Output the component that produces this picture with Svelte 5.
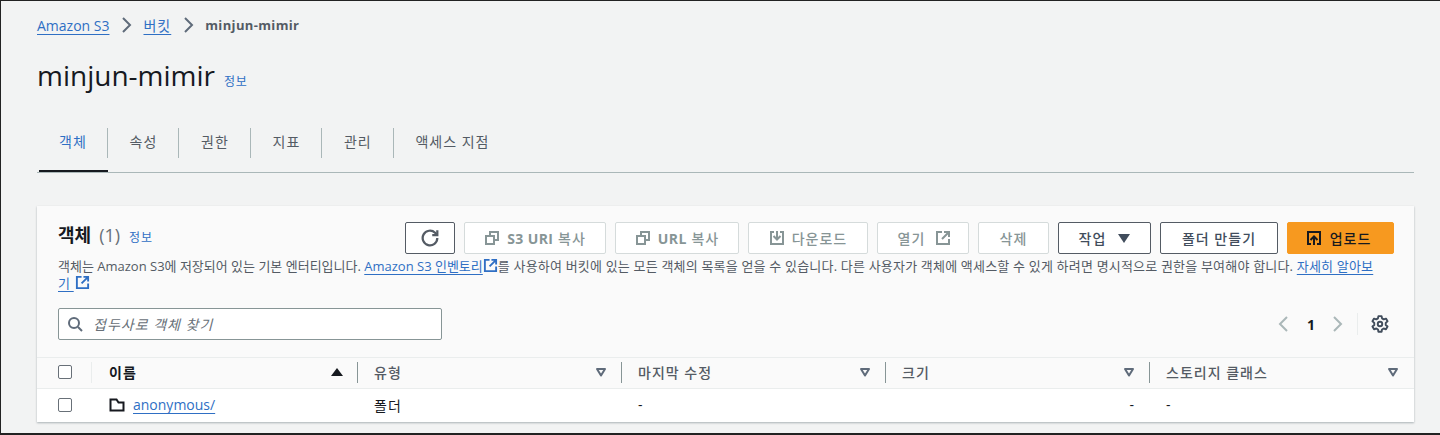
<script lang="ts">
  const tabs = ['객체', '속성', '권한', '지표', '관리', '액세스 지점'];
  const columns = ['유형', '마지막 수정', '크기', '스토리지 클래스'];
</script>

{#snippet external(size = 15)}
  <svg class="ext" width={size} height={size} viewBox="0 0 16 16" fill="none" stroke="currentColor" stroke-width="2">
    <path d="M7 2H2v12h12V9" />
    <path d="M9 2h5v5M14 2 7 9" />
  </svg>
{/snippet}

{#snippet copy()}
  <svg width="16" height="16" viewBox="0 0 16 16" fill="none" stroke="currentColor" stroke-width="2">
    <path d="M2 6h8v8H2z" />
    <path d="M6 5V2h8v8h-3" />
  </svg>
{/snippet}

{#snippet caret()}
  <svg class="caret" width="12" height="12" viewBox="0 0 12 12" fill="none" stroke="#5f6b7a" stroke-width="2">
    <path d="M2 3h8L6 9.5z" stroke-linejoin="round" />
  </svg>
{/snippet}

<div class="page">
  <nav class="crumbs">
    <a href="#s3">Amazon S3</a>
    <svg width="16" height="16" viewBox="0 0 16 16" fill="none" stroke="#5f6b7a" stroke-width="2"><path d="m4 1 7 7-7 7" /></svg>
    <a class="ko" href="#buckets">버킷</a>
    <svg width="16" height="16" viewBox="0 0 16 16" fill="none" stroke="#5f6b7a" stroke-width="2"><path d="m4 1 7 7-7 7" /></svg>
    <span class="current">minjun-mimir</span>
  </nav>

  <div class="title-row">
    <h1>minjun-mimir</h1>
    <a class="info" href="#info">정보</a>
  </div>

  <div class="tabs">
    {#each tabs as tab, i}
      <div class="tab" class:active={i === 0}><span>{tab}</span></div>
    {/each}
  </div>

  <section class="card">
    <div class="card-head">
      <div class="head-row">
        <div class="card-title">
          <h2>객체</h2>
          <span class="count">(1)</span>
          <a class="info" href="#info">정보</a>
        </div>
        <div class="actions">
          <button class="btn refresh" aria-label="새로 고침">
            <svg width="18" height="18" viewBox="0 0 16 16" fill="none" stroke="currentColor" stroke-width="2">
              <path d="M14.5 8a6.5 6.5 0 1 1-2-4.7L14 5" />
              <path d="M14.5 1v4.5H10" />
            </svg>
          </button>
          <button class="btn off w142">{@render copy()}<span><b>S3 URI</b> 복사</span></button>
          <button class="btn off w124">{@render copy()}<span><b>URL</b> 복사</span></button>
          <button class="btn off w120">
            <svg width="16" height="16" viewBox="0 0 16 16" fill="none" stroke="currentColor" stroke-width="2">
              <path d="M5 2H2v12h12V2h-3" />
              <path d="M8 1v8M4.5 6 8 9.5 11.5 6" />
            </svg>
            다운로드
          </button>
          <button class="btn off w92">열기 {@render external(16)}</button>
          <button class="btn off w71">삭제</button>
          <button class="btn w93">작업
            <svg width="12" height="12" viewBox="0 0 12 12" fill="currentColor"><path d="M0 2h12L6 11z" /></svg>
          </button>
          <button class="btn w118">폴더 만들기</button>
          <button class="btn primary w107">
            <svg width="16" height="16" viewBox="0 0 16 16" fill="none" stroke="currentColor" stroke-width="2">
              <path d="M5 14H2V2h12v12h-3" />
              <path d="M8 15V7M4.5 10 8 6.5 11.5 10" />
            </svg>
            업로드
          </button>
        </div>
      </div>
      <p class="desc">객체는 Amazon S3에 저장되어 있는 기본 엔터티입니다. <a href="#inv">Amazon S3 인벤토리 </a>{@render external()}<span class="rest">를 사용하여 버킷에 있는 모든 객체의 목록을 얻을 수 있습니다. 다른 사용자가 객체에 액세스할 수 있게 하려면 명시적으로 권한을 부여해야 합니다. <a href="#more">자세히 알아보</a><span class="glue"><a href="#more">기&nbsp;</a>{@render external()}</span></span></p>
      <div class="tools">
        <div class="search">
          <svg width="16" height="16" viewBox="0 0 16 16" fill="none" stroke="#5f6b7a" stroke-width="2">
            <circle cx="7" cy="7" r="5" />
            <path d="m11 11 4 4" />
          </svg>
          <span>접두사로 객체 찾기</span>
        </div>
        <div class="pager">
          <svg width="16" height="16" viewBox="0 0 16 16" fill="none" stroke="#aab7b8" stroke-width="2"><path d="m11 1-7 7 7 7" /></svg>
          <b>1</b>
          <svg width="16" height="16" viewBox="0 0 16 16" fill="none" stroke="#aab7b8" stroke-width="2"><path d="m4 1 7 7-7 7" /></svg>
          <div class="gear">
            <svg width="18" height="18" viewBox="0 0 16 16" fill="none" stroke="#414d5c" stroke-width="1.7">
              <circle cx="8" cy="8" r="2" />
              <path d="M6.6 1h2.8l.4 2 1.5.9 2-.7 1.4 2.4-1.6 1.4v1.9l1.6 1.4-1.4 2.4-2-.7-1.5.9-.4 2H6.6l-.4-2-1.5-.9-2 .7-1.4-2.4 1.6-1.4V7L1.3 5.6l1.4-2.4 2 .7 1.5-.9z" stroke-linejoin="round" />
            </svg>
          </div>
        </div>
      </div>
    </div>

    <div class="table">
      <div class="th check"><span class="box"></span></div>
      <div class="th name">
        <span>이름</span>
        <svg width="12" height="12" viewBox="0 0 12 12"><path d="M0 10h12L6 2z" fill="#16191f" /></svg>
      </div>
      {#each columns as col}
        <div class="th"><span>{col}</span>{@render caret()}</div>
      {/each}

      <div class="td check"><span class="box"></span></div>
      <div class="td folder">
        <svg width="16" height="16" viewBox="0 0 16 16" fill="none" stroke="#16191f" stroke-width="2">
          <path d="M1.5 2.5h6l2 3h5v8h-13z" />
        </svg>
        <a href="#anon">anonymous/</a>
      </div>
      <div class="td ko">폴더</div>
      <div class="td">-</div>
      <div class="td right">-</div>
      <div class="td">-</div>
    </div>
  </section>
</div>

<style>
  :global(body) {
    margin: 0;
    background: #f2f3f3;
  }

  .page {
    box-sizing: border-box;
    height: 435px;
    overflow: hidden;
    border: 1px solid #222;
    border-width: 1px 0 2px 1px;
    padding: 13px 26px 0 36px;
    font-family: "Open Sans", "Noto Sans CJK KR", sans-serif;
    font-size: 14px;
    color: #16191f;
  }

  a {
    color: #2f6fc4;
    text-underline-offset: 3px;
  }

  .ko {
    letter-spacing: 1px;
  }

  .crumbs {
    display: flex;
    align-items: center;
    gap: 10px;
    height: 22px;
    font-size: 14px;
  }

  .crumbs a.ko {
    margin-left: -2px;
  }

  .current {
    margin-left: -2px;
    font-weight: 700;
    font-size: 13px;
    letter-spacing: 0.35px;
    color: #545b64;
  }

  .title-row {
    display: flex;
    align-items: baseline;
    gap: 9px;
    margin-top: 19px;
  }

  h1 {
    margin: 0;
    font-size: 28px;
    font-weight: 400;
    line-height: 40px;
    color: #16191f;
  }

  .info {
    font-size: 12px;
    letter-spacing: 0.8px;
    text-decoration: none;
  }

  .tabs {
    display: flex;
    height: 44px;
    margin-top: 33px;
    padding-left: 2px;
    border-bottom: 1px solid #aab7b8;
  }

  .tab {
    position: relative;
    height: 100%;
    padding: 0 21.85px;
    letter-spacing: 1px;
    line-height: 30px;
    color: #545b64;
  }

  .tab span {
    display: block;
    margin-top: -1px;
  }

  .tab:not(:last-child)::after {
    content: "";
    position: absolute;
    top: 0;
    right: 0;
    height: 30px;
    width: 1px;
    background: #aab7b8;
  }

  .tab.active {
    padding: 0 21px 0 20px;
    color: #2f6fc4;
  }

  .tab.active::before {
    content: "";
    position: absolute;
    left: 0;
    right: 0;
    bottom: 0;
    height: 2px;
    background: #16191f;
  }

  .card {
    margin-top: 33px;
    background: #fafafa;
    box-shadow: 0 1px 2px rgba(0, 27, 36, 0.3);
  }

  .card-head {
    padding: 16px 20px 17px 21px;
  }

  .head-row {
    display: flex;
    justify-content: space-between;
    align-items: flex-start;
  }

  .card-title {
    display: flex;
    align-items: baseline;
    gap: 7px;
    margin-top: -1px;
  }

  .card-title .info {
    margin-left: 2px;
    letter-spacing: 1px;
  }

  h2 {
    margin: 0;
    font-size: 18px;
    font-weight: 700;
  }

  .count {
    margin-left: 1px;
    font-size: 18px;
    color: #687078;
  }

  .actions {
    display: flex;
    gap: 9px;
  }

  .btn {
    box-sizing: border-box;
    display: flex;
    align-items: center;
    justify-content: center;
    gap: 7px;
    height: 32px;
    padding: 0;
    border: 1px solid #545b64;
    border-radius: 2px;
    background: #fff;
    color: #414d5c;
    font: 500 14px "Open Sans", "Noto Sans CJK KR", sans-serif;
    letter-spacing: 1px;
  }

  .btn.refresh { width: 50px; color: #545b64; }
  .btn.off { border-color: #d5dbdb; color: #879596; }
  .btn.primary { border-color: #f7991f; background: #f7991f; color: #16191f; padding-right: 4px; gap: 8px; }
  .w142 { width: 142px; }
  .w124 { width: 124px; }
  .w120 { width: 120px; }
  .w92 { width: 92px; gap: 10px; padding-left: 3px; }
  .w71 { width: 71px; }
  .w93 { width: 93px; gap: 12px; }
  .w118 { width: 118px; }
  .w107 { width: 107px; }

  .btn b {
    letter-spacing: 0.4px;
  }

  .desc {
    margin: 4px 0 0;
    font-size: 13px;
    line-height: 17px;
    color: #545b64;
  }

  .rest {
    letter-spacing: 0.19px;
  }

  .glue {
    white-space: nowrap;
  }

  .glue .ext {
    margin-left: 1px;
  }

  .ext {
    vertical-align: -2px;
    color: #2f6fc4;
  }

  .btn .ext { color: inherit; }

  .tools {
    display: flex;
    justify-content: space-between;
    align-items: center;
    margin-top: 16px;
  }

  .search {
    box-sizing: border-box;
    display: flex;
    align-items: center;
    gap: 10px;
    width: 384px;
    height: 32px;
    padding: 0 8px;
    border: 1px solid #879596;
    border-radius: 2px;
    background: #fff;
  }

  .search span {
    font-size: 14px;
    font-style: italic;
    letter-spacing: 1px;
    color: #687078;
  }

  .pager {
    display: flex;
    align-items: center;
    gap: 12px;
    margin-right: 5px;
  }

  .pager b {
    width: 14px;
    text-align: center;
    font-size: 14px;
  }

  .gear {
    display: flex;
    margin-left: -1px;
    padding: 2px 0 2px 13px;
    border-left: 1px solid #eaeded;
  }

  .table {
    display: grid;
    grid-template-columns: 55px 266px repeat(4, 264px);
  }

  .th {
    box-sizing: border-box;
    position: relative;
    display: flex;
    align-items: center;
    justify-content: space-between;
    height: 32px;
    padding: 0 15px 3px 16px;
    border-top: 1px solid #eaeded;
    border-bottom: 1px solid #eaeded;
    color: #545b64;
    font-weight: 500;
    letter-spacing: 1px;
  }

  .th::after {
    content: "";
    position: absolute;
    right: 0;
    top: 4px;
    bottom: 5px;
    width: 1px;
    background: #879596;
  }

  .th:nth-child(6)::after { display: none; }

  .th.check::after { background: #eaeded; }
  .th.name { padding-left: 17px; color: #16191f; font-weight: 700; }

  .check { padding: 0 0 3px 21px; justify-content: flex-start; }

  .box {
    display: block;
    box-sizing: border-box;
    width: 14px;
    height: 14px;
    border: 1px solid #687078;
    border-radius: 2px;
    background: #fff;
  }

  .td {
    box-sizing: border-box;
    display: flex;
    align-items: center;
    height: 33px;
    padding: 0 16px 2px;
    background: #fff;
  }

  .td.check { padding: 0 0 2px 21px; }
  .td.folder { gap: 8px; padding-left: 17px; }
  .td.right { justify-content: flex-end; }
</style>
